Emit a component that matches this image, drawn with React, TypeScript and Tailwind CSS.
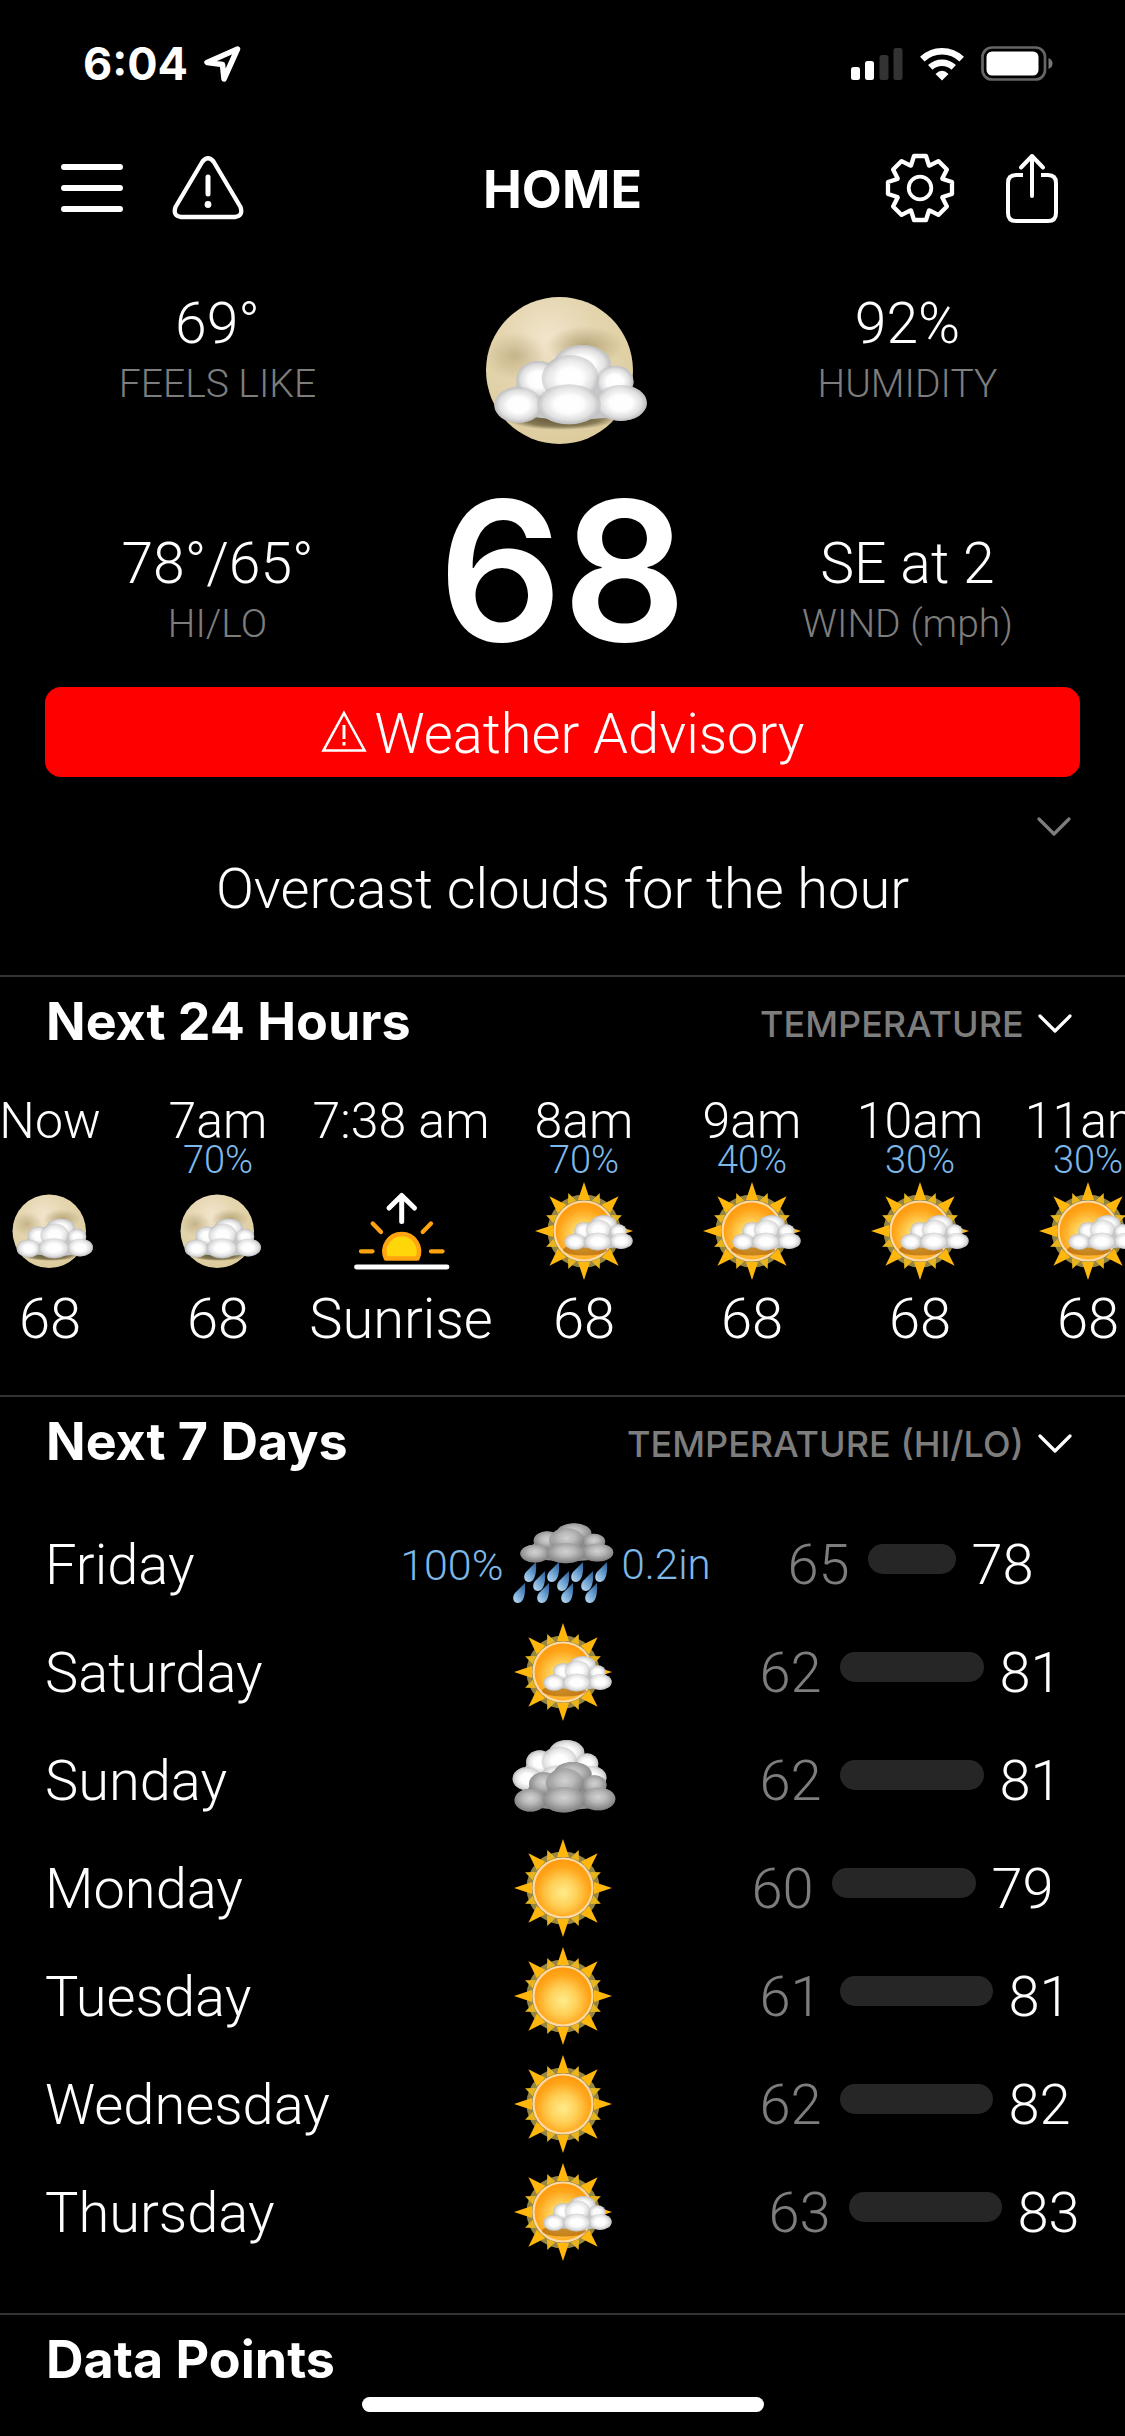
import type { ReactNode } from 'react';

/* ---------- status and toolbar icons ---------- */

function LocationIcon() {
  return (
    <svg className="h-10 w-10" viewBox="0 0 40 40" fill="none" stroke="#fff" strokeWidth="5.5" strokeLinejoin="round" aria-hidden="true">
      <path d="M35.5 5 5 18.5 20.5 20.5 22 35Z" />
    </svg>
  );
}

function SignalIcon() {
  return (
    <svg className="h-[34px] w-[52px]" viewBox="0 0 52 34" aria-hidden="true">
      <rect x="0" y="20" width="9" height="13" rx="2.5" fill="#fff" />
      <rect x="14" y="14" width="9" height="19" rx="2.5" fill="#fff" />
      <rect x="28.5" y="8" width="9" height="25" rx="2.5" fill="#333" />
      <rect x="42.5" y="1" width="9" height="32" rx="2.5" fill="#333" />
    </svg>
  );
}

function WifiIcon() {
  return (
    <svg className="h-[34px] w-[44px]" viewBox="0 0 44 34" fill="none" stroke="#fff" strokeWidth="6.5" aria-hidden="true">
      <path d="M2.3 12.2A28.5 28.5 0 0 1 41.7 12.2" />
      <path d="M10.3 20.3A17 17 0 0 1 33.7 20.3" />
      <path d="M22 33.5 15.5 27Q22 20.5 28.5 27Z" fill="#fff" stroke="none" />
    </svg>
  );
}

function BatteryIcon() {
  return (
    <svg className="h-[36px] w-[72px]" viewBox="0 0 72 36" fill="none" aria-hidden="true">
      <rect x="1.5" y="1.5" width="62.5" height="32" rx="9.5" stroke="#666" strokeWidth="2.7" />
      <rect x="5.5" y="5.5" width="52" height="24" rx="5.5" fill="#fff" />
      <path d="M67.5 12Q71.5 13.5 71.5 17.5T67.5 23Z" fill="#777" />
    </svg>
  );
}

function MenuIcon() {
  return (
    <svg className="h-[50px] w-[62px]" viewBox="0 0 62 50" stroke="#fff" strokeWidth="6" strokeLinecap="round" aria-hidden="true">
      <path d="M3 4H59M3 25H59M3 46H59" />
    </svg>
  );
}

function AlertIcon() {
  return (
    <svg className="h-[64px] w-[72px]" viewBox="0 0 72 64" fill="none" stroke="#fff" strokeWidth="4.3" strokeLinecap="round" strokeLinejoin="round" aria-hidden="true">
      <path d="M30.5 5.500Q36 -1 41.5 5.500L68.5 51Q71.5 60 63 61H9Q.5 60 3.500 51Z" />
      <path d="M36 21V38" strokeWidth="5" />
      <circle cx="36" cy="48.5" r="3.4" fill="#fff" stroke="none" />
    </svg>
  );
}

const gearPath = (() => {
  const tooth = [[-9, -22.5], [-6, -32], [6, -32], [9, -22.5]];
  const points: string[] = [];
  for (let i = 0; i < 8; i++) {
    const a = (i * Math.PI) / 4;
    for (const [x, y] of tooth) {
      points.push(
        `${(35 + x * Math.cos(a) - y * Math.sin(a)).toFixed(1)} ${(35 + x * Math.sin(a) + y * Math.cos(a)).toFixed(1)}`,
      );
    }
  }
  return `M${points.join('L')}Z`;
})();

function GearIcon() {
  return (
    <svg className="h-[70px] w-[70px]" viewBox="0 0 70 70" fill="none" stroke="#fff" strokeWidth="4.3" strokeLinejoin="round" aria-hidden="true">
      <path d={gearPath} />
      <circle cx="35" cy="35" r="11.3" strokeWidth="3.8" />
    </svg>
  );
}

function ShareIcon() {
  return (
    <svg className="h-[70px] w-[52px]" viewBox="0 0 52 70" fill="none" stroke="#fff" strokeWidth="4" strokeLinecap="round" strokeLinejoin="round" aria-hidden="true">
      <path d="M17 22H10Q2 22 2 30V60Q2 68 10 68H42Q50 68 50 60V30Q50 22 42 22H35" strokeLinecap="butt" />
      <path d="M26 3V43M15 14.5 26 3 37 14.5" />
    </svg>
  );
}

function Chevron({ className }: { className: string }) {
  return (
    <svg className={className} viewBox="0 0 34 20" fill="none" stroke="currentColor" strokeWidth="3.2" strokeLinecap="round" strokeLinejoin="round" aria-hidden="true">
      <path d="M2 2 17 17 32 2" />
    </svg>
  );
}

/* ---------- weather art ---------- */

function Gradients() {
  return (
    <svg className="absolute h-0 w-0" aria-hidden="true">
      <defs>
        <radialGradient id="puffLight" cx=".5" cy=".5" r=".5">
          <stop offset="0" stopColor="#fff" />
          <stop offset=".45" stopColor="#fdfdfd" />
          <stop offset=".8" stopColor="#e4e4e5" stopOpacity=".85" />
          <stop offset="1" stopColor="#bcbcbe" stopOpacity=".55" />
        </radialGradient>
        <radialGradient id="puffDark" cx=".5" cy=".42" r=".55">
          <stop offset="0" stopColor="#d2d2d2" />
          <stop offset=".45" stopColor="#bababa" stopOpacity=".95" />
          <stop offset=".8" stopColor="#999" stopOpacity=".75" />
          <stop offset="1" stopColor="#7a7a7a" stopOpacity=".5" />
        </radialGradient>
        <radialGradient id="sunFace" cx=".5" cy=".58" r=".52">
          <stop offset="0" stopColor="#ffec8c" />
          <stop offset=".45" stopColor="#ffd058" />
          <stop offset=".85" stopColor="#ffa51a" />
          <stop offset="1" stopColor="#ff9d12" />
        </radialGradient>
        <radialGradient id="moonFace" cx=".42" cy=".28" r=".75">
          <stop offset="0" stopColor="#f1e4cb" />
          <stop offset=".45" stopColor="#e4d5ae" />
          <stop offset="1" stopColor="#dccb9c" />
        </radialGradient>
        <radialGradient id="moonPatch">
          <stop offset="0" stopColor="#b7a578" />
          <stop offset="1" stopColor="#b7a578" stopOpacity="0" />
        </radialGradient>
        <radialGradient id="cloudShadow">
          <stop offset="0" stopColor="#4a4020" stopOpacity=".9" />
          <stop offset=".7" stopColor="#4a4020" stopOpacity=".6" />
          <stop offset="1" stopColor="#4a4020" stopOpacity="0" />
        </radialGradient>
        <linearGradient id="drop" x1=".9" y1="0" x2=".2" y2="1">
          <stop offset="0" stopColor="#2d5f96" />
          <stop offset=".55" stopColor="#6ea3d3" />
          <stop offset="1" stopColor="#b5d6ee" />
        </linearGradient>
      </defs>
    </svg>
  );
}

const puffs = [
  [262, 58, 86, 58],
  [130, 104, 66, 56],
  [360, 110, 56, 48],
  [226, 100, 86, 70],
  [70, 180, 72, 54],
  [378, 174, 78, 54],
  [222, 178, 96, 60],
];

/* Seven puffs over one flat body, 455 x 238 units. */
function Cloud({ transform, dark = false }: { transform: string; dark?: boolean }) {
  return (
    <g transform={transform}>
      <g fill={dark ? '#8e8e8e' : '#c6c6c8'}>
        <path d="M30 200Q60 70 170 60T330 60Q420 120 425 200Q240 250 30 200Z" />
        {puffs.map(([cx, cy, rx, ry]) => (
          <ellipse key={cx} cx={cx} cy={cy} rx={rx} ry={ry} />
        ))}
      </g>
      {puffs.map(([cx, cy, rx, ry]) => (
        <ellipse key={cx} cx={cx} cy={cy} rx={rx} ry={ry} fill={dark ? 'url(#puffDark)' : 'url(#puffLight)'} />
      ))}
    </g>
  );
}

function MoonArt() {
  return (
    <>
      <circle cx="88.5" cy="90.5" r="73.5" fill="url(#moonFace)" />
      <ellipse cx="44" cy="76" rx="30" ry="24" fill="url(#moonPatch)" opacity=".7" />
      <ellipse cx="114" cy="66" rx="38" ry="20" fill="url(#moonPatch)" />
      <ellipse cx="90" cy="138" rx="56" ry="12" fill="url(#cloudShadow)" />
      <Cloud transform="translate(24 65) scale(.333)" />
    </>
  );
}

const ray = (angle: number, length: number, half: number) => (
  <path key={angle} d={`M${-half} -31L0 ${-length}L${half} -31Z`} transform={`rotate(${angle})`} />
);

function SunArt() {
  return (
    <g transform="translate(49 49)">
      <circle r="36.5" fill="#968642" />
      <g fill="#e9b51f">{[22.5, 67.5, 112.5, 157.5, 202.5, 247.5, 292.5, 337.5].map((a) => ray(a, 41, 4.5))}</g>
      <g fill="#ffb60d">{[0, 45, 90, 135, 180, 225, 270, 315].map((a) => ray(a, 49, 6))}</g>
      <circle r="29.5" fill="url(#sunFace)" stroke="#ffd9a2" strokeWidth="2.2" />
    </g>
  );
}

type Sky = 'moon' | 'sunrise' | 'partly' | 'sun' | 'rain' | 'overcast';

const drops = [
  [16, 57], [39, 57], [63, 57], [87, 57],
  [25, 66], [49, 66], [73, 66],
  [5, 78], [29, 78], [53, 78], [77, 78],
];

const art: Record<Sky, ReactNode> = {
  moon: (
    <g transform="translate(4 4) scale(.5)">
      <MoonArt />
    </g>
  ),
  sun: <SunArt />,
  partly: (
    <>
      <SunArt />
      <ellipse cx="50" cy="68" rx="22" ry="5.5" fill="#9a5200" opacity=".55" />
      <Cloud transform="translate(29.7 33) scale(.149)" />
    </>
  ),
  overcast: (
    <>
      <Cloud transform="translate(-1 9) scale(.205 .215)" />
      <Cloud transform="translate(1 31) scale(.22 .212)" dark />
    </>
  ),
  rain: (
    <>
      {drops.map(([x, y]) => (
        <path key={`${x}-${y}`} d="M6 -10C6.5 -2 6 9.500 -1 10C-6.500 10 -7 3.500 -4 0Z" transform={`translate(${x} ${y})`} fill="url(#drop)" />
      ))}
      <Cloud transform="translate(6.7 8.3) scale(.203 .168)" dark />
    </>
  ),
  sunrise: (
    <g fill="none" strokeLinecap="round" strokeLinejoin="round">
      <path d="M34 76.5A17.3 17.3 0 1 1 65.4 76.5Z" fill="#ffd60a" stroke="#ffa310" strokeWidth="4.5" />
      <path d="M9 69.3H20.5M79 69.3H90.5M20.7 41.5 29 50M79 41.5 70.7 50" stroke="#ffa310" strokeWidth="4.3" />
      <path d="M49.7 14V39.5M37 26 49.7 13.5 62.5 26" stroke="#fff" strokeWidth="5" />
      <path d="M4.5 85H95" stroke="#fff" strokeWidth="4.8" />
    </g>
  ),
};

function SkyIcon({ sky }: { sky: Sky }) {
  return (
    <svg className="h-[98px] w-[98px] shrink-0 overflow-visible" viewBox="0 0 98 98" role="img" aria-label={sky}>
      {art[sky]}
    </svg>
  );
}

/* ---------- data ---------- */

type Hour = { time: string; chance?: string; sky: Sky; value: string };

const hours: Hour[] = [
  { time: 'Now', sky: 'moon', value: '68' },
  { time: '7am', chance: '70%', sky: 'moon', value: '68' },
  { time: '7:38 am', sky: 'sunrise', value: 'Sunrise' },
  { time: '8am', chance: '70%', sky: 'partly', value: '68' },
  { time: '9am', chance: '40%', sky: 'partly', value: '68' },
  { time: '10am', chance: '30%', sky: 'partly', value: '68' },
  { time: '11am', chance: '30%', sky: 'partly', value: '68' },
];

type Day = { name: string; sky: Sky; lo: number; hi: number; start: number; span: number; chance?: string; amount?: string };

const days: Day[] = [
  { name: 'Friday', sky: 'rain', lo: 65, hi: 78, start: 37, span: 88, chance: '100%', amount: '0.2in' },
  { name: 'Saturday', sky: 'partly', lo: 62, hi: 81, start: 9, span: 144 },
  { name: 'Sunday', sky: 'overcast', lo: 62, hi: 81, start: 9, span: 144 },
  { name: 'Monday', sky: 'sun', lo: 60, hi: 79, start: 1, span: 144 },
  { name: 'Tuesday', sky: 'sun', lo: 61, hi: 81, start: 9, span: 153 },
  { name: 'Wednesday', sky: 'sun', lo: 62, hi: 82, start: 9, span: 153 },
  { name: 'Thursday', sky: 'partly', lo: 63, hi: 83, start: 18, span: 153 },
];

/* ---------- page parts ---------- */

function Stat({ value, label }: { value: string; label: string }) {
  return (
    <div className="text-center">
      <p className="text-[57px] leading-[68px]">{value}</p>
      <p className="text-[39px] leading-[52px] text-[#7d7d7d]">{label}</p>
    </div>
  );
}

function SectionHeader({ title, metric }: { title: string; metric?: string }) {
  return (
    <div className="flex h-[90px] items-center justify-between pr-[53px] pl-[46px] font-[Inter,sans-serif]">
      <h2 className="text-[52px] leading-[64px] font-bold">{title}</h2>
      {metric && (
        <label className="flex items-center gap-[14px] pt-1">
          <span className="sr-only">{title} metric</span>
          <select className="appearance-none bg-transparent text-[36px] leading-[48px] font-medium text-[#7d7d7d]">
            <option>{metric}</option>
          </select>
          <Chevron className="h-[20px] w-[34px]" />
        </label>
      )}
    </div>
  );
}

export default function App() {
  return (
    <main className="min-h-screen overflow-hidden bg-black font-[Roboto,sans-serif] font-light text-white">
      <Gradients />

      <div className="flex h-[128px] items-center justify-between pr-[72px] pl-[83px]">
        <div className="flex items-center gap-[14px]">
          <span className="font-[Inter,sans-serif] text-[45px] leading-[56px] font-bold">6:04</span>
          <LocationIcon />
        </div>
        <div className="flex items-center gap-[17px]">
          <SignalIcon />
          <WifiIcon />
          <BatteryIcon />
        </div>
      </div>

      <header className="grid h-[120px] grid-cols-[1fr_auto_1fr] items-center pr-[67px] pl-[61px]">
        <div className="flex items-center gap-[49px]">
          <button type="button" aria-label="Menu"><MenuIcon /></button>
          <button type="button" aria-label="Alerts"><AlertIcon /></button>
        </div>
        <h1 className="pt-1 pl-[6px] font-[Inter,sans-serif] text-[52px] leading-[64px] font-bold">HOME</h1>
        <div className="flex items-center justify-end gap-[51px]">
          <button type="button" aria-label="Settings"><GearIcon /></button>
          <button type="button" aria-label="Share"><ShareIcon /></button>
        </div>
      </header>

      <section className="grid grid-cols-3 px-[45px] pt-[42px]" aria-label="Current conditions">
        <div className="flex flex-col justify-between">
          <Stat value="69°" label="FEELS LIKE" />
          <Stat value="78°/65°" label="HI/LO" />
        </div>
        <div className="flex h-[360px] flex-col items-center justify-between">
          <svg className="h-[160px] w-[182px]" viewBox="1 10 182 160" role="img" aria-label="Cloudy night">
            <MoonArt />
          </svg>
          <p className="font-[Inter,sans-serif] text-[194px] leading-[158px] font-semibold">68</p>
        </div>
        <div className="flex flex-col justify-between">
          <Stat value="92%" label="HUMIDITY" />
          <Stat value="SE at 2" label="WIND (mph)" />
        </div>
      </section>

      <div className="px-[45px] pt-[37px]">
        <button type="button" className="flex h-[90px] w-full items-center justify-center gap-2 rounded-[16px] bg-[#ff0000] pt-1 text-[56px] leading-[68px]">
          <svg className="mb-1 h-[44px] w-[46px]" viewBox="0 0 46 44" fill="none" stroke="#fff" strokeWidth="2.6" aria-hidden="true">
            <path d="M23 3 43.5 40.5H2.5Z" />
            <path d="M23 15V29M23 32V35.5" strokeWidth="3" />
          </svg>
          Weather Advisory
        </button>
      </div>

      <section className="pb-11" aria-label="Hour summary">
        <div className="flex justify-end pt-8 pr-[54px]">
          <button type="button" aria-label="Expand" className="flex h-9 items-center text-[#7d7d7d]">
            <Chevron className="h-[20px] w-[34px]" />
          </button>
        </div>
        <p className="pt-[2px] text-center text-[56px] leading-[84px]">Overcast clouds for the hour</p>
      </section>

      <section className="border-t-2 border-[#333333]">
        <SectionHeader title="Next 24 Hours" metric="TEMPERATURE" />
        <ul className="-ml-[34px] flex pt-8 pb-[46px]">
          {hours.map((hour) => (
            <li key={hour.time} className={`flex shrink-0 flex-col items-center ${hour.sky === 'sunrise' ? 'w-[198px]' : 'w-[168px]'}`}>
              <span className="text-[50px] leading-[44px] whitespace-nowrap">{hour.time}</span>
              <span className="mb-[5px] h-[34px] text-[38px] leading-[34px] text-[#7db8e8]">{hour.chance}</span>
              <SkyIcon sky={hour.sky} />
              <span className="mt-[9px] text-[56px] leading-[60px]">{hour.value}</span>
            </li>
          ))}
        </ul>
      </section>

      <section className="border-t-2 border-[#333333]">
        <SectionHeader title="Next 7 Days" metric="TEMPERATURE (HI/LO)" />
        <ul className="px-[45px] pt-[23px] pb-[47px]">
          {days.map((day) => (
            <li key={day.name} className="grid h-[108px] grid-cols-[1fr_110px_1fr] items-center text-[56px] leading-[68px]">
              <div className="flex items-center justify-between pt-[2px]">
                <span>{day.name}</span>
                <span className="pr-1 text-[43px]">
                  <span className="text-[#7db8e8]">{day.chance}</span>
                </span>
              </div>
              <div className="flex justify-center">
                <SkyIcon sky={day.sky} />
              </div>
              <div className="flex items-center pt-[2px]">
                <span className="w-[133px] shrink-0 pl-1 text-[42px] text-[#7db8e8]">{day.amount}</span>
                <div className="flex items-center gap-4" style={{ marginLeft: day.start }}>
                  <span className="w-16 text-[#7d7d7d]">{day.lo}</span>
                  <span className="mb-3 h-[30px] rounded-full bg-[#262626]" style={{ width: day.span }} />
                  <span>{day.hi}</span>
                </div>
              </div>
            </li>
          ))}
        </ul>
      </section>

      <section className="border-t-2 border-[#333333]">
        <SectionHeader title="Data Points" />
      </section>

      <div className="fixed inset-x-0 bottom-6 flex justify-center">
        <div className="h-[15px] w-[402px] rounded-full bg-white" />
      </div>
    </main>
  );
}
